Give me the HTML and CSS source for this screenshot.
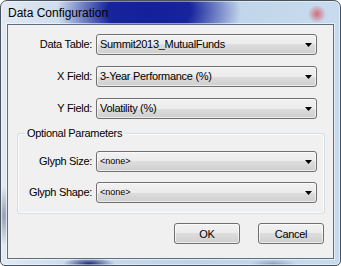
FILE: index.html
```html
<!DOCTYPE html>
<html>
<head>
<meta charset="utf-8">
<title>Data Configuration</title>
<link rel="stylesheet" href="styles.css">
</head>
<body>
<div class="window">
  <div class="titlebar"><span class="title">Data Configuration</span></div>
  <div class="client">
    <div class="form">
      <span class="lbl">Data Table:</span>
      <div class="combo"><span class="val">Summit2013_MutualFunds</span><svg class="arrow" width="7" height="4" viewBox="0 0 7 4"><polygon points="0,0 7,0 3.5,4" fill="#000"/></svg></div>
      <span class="lbl">X Field:</span>
      <div class="combo"><span class="val">3-Year Performance (%)</span><svg class="arrow" width="7" height="4" viewBox="0 0 7 4"><polygon points="0,0 7,0 3.5,4" fill="#000"/></svg></div>
      <span class="lbl">Y Field:</span>
      <div class="combo"><span class="val">Volatility (%)</span><svg class="arrow" width="7" height="4" viewBox="0 0 7 4"><polygon points="0,0 7,0 3.5,4" fill="#000"/></svg></div>
    </div>
    <fieldset class="group">
      <legend class="legend">Optional Parameters</legend>
      <div class="form inner">
        <span class="lbl">Glyph Size:</span>
        <div class="combo"><span class="val small">&lt;none&gt;</span><svg class="arrow" width="7" height="4" viewBox="0 0 7 4"><polygon points="0,0 7,0 3.5,4" fill="#000"/></svg></div>
        <span class="lbl">Glyph Shape:</span>
        <div class="combo"><span class="val small">&lt;none&gt;</span><svg class="arrow" width="7" height="4" viewBox="0 0 7 4"><polygon points="0,0 7,0 3.5,4" fill="#000"/></svg></div>
      </div>
    </fieldset>
    <div class="buttons">
      <button class="btn">OK</button>
      <button class="btn">Cancel</button>
    </div>
  </div>
</div>
</body>
</html>
```
FILE: styles.css
```css
html, body {
  margin: 0;
  padding: 0;
  background: #ffffff;
}
body {
  width: 341px;
  height: 266px;
  overflow: hidden;
  font-family: "Liberation Sans", Arial, sans-serif;
}
.window {
  box-sizing: border-box;
  width: 341px;
  height: 266px;
  border: 1px solid #48535f;
  border-radius: 7px 7px 5px 5px;
  padding: 0 6px 6px 6px;
  display: flex;
  flex-direction: column;
  box-shadow: inset 0 0 0 1px rgba(255,255,255,0.45);
  background:
    radial-gradient(circle 9px at 316px 13px, rgba(214,80,92,0.8), rgba(214,80,92,0)),
    radial-gradient(ellipse 92px 55px at 148px 10px, #14209a 0%, #17249c 45%, rgba(60,90,180,0) 100%),
    radial-gradient(ellipse 26px 7px at 88px 263px, #1a2878 0%, rgba(26,40,120,0) 100%),
    radial-gradient(ellipse 24px 5px at 272px 263px, rgba(120,140,175,0.7), rgba(120,140,175,0)),
    radial-gradient(ellipse 6px 30px at 3px 215px, rgba(110,125,150,0.7), rgba(110,125,150,0)),
    linear-gradient(90deg, #e2eaf3 0%, #cddcec 18%, #bed3e9 55%, #c8dbee 100%);
}
.titlebar {
  height: 23px;
  display: flex;
  align-items: center;
  padding-left: 1px;
}
.title {
  font-size: 12px;
  color: #000;
}
.client {
  flex: 1;
  background: #f0f0f0;
  border: 1px solid #5d6d82;
  box-shadow: 0 0 0 1px rgba(255,255,255,0.55);
  padding: 9px 8px 0 9px;
  font-size: 11px;
  letter-spacing: -0.3px;
  color: #000;
}
.form {
  display: grid;
  grid-template-columns: 75px 221px;
  column-gap: 4px;
  row-gap: 11px;
  align-items: center;
}
.form.inner {
  grid-template-columns: 74px 221px;
  row-gap: 10px;
}
.lbl {
  text-align: right;
  white-space: nowrap;
  line-height: 13px;
}
.combo {
  box-sizing: border-box;
  height: 21px;
  border: 1px solid #707070;
  border-radius: 3px;
  display: flex;
  align-items: center;
  padding: 0 4px 0 3px;
  background: linear-gradient(to bottom, #f2f2f2 0%, #ebebeb 50%, #dddddd 50%, #cfcfcf 100%);
  box-shadow: inset 0 0 0 1px rgba(255,255,255,0.6);
}
.val {
  flex: 1;
  white-space: nowrap;
  line-height: 13px;
}
.val.small {
  font-size: 9px;
  letter-spacing: 0;
}
.arrow {
  display: block;
  flex: none;
}
.group {
  margin: 8px 0 0 0;
  padding: 11px 7px 10px 0;
  border: 1px solid #d5dfe5;
  border-radius: 3px;
  min-width: 0;
  box-shadow: inset 0 0 0 1px rgba(255,255,255,0.7);
}
.legend {
  margin-left: 7px;
  padding: 0 2px;
  line-height: 13px;
}
.buttons {
  display: flex;
  justify-content: flex-end;
  gap: 18px;
  margin-top: 9px;
  padding-right: 1px;
}
.btn {
  box-sizing: border-box;
  width: 66px;
  height: 21px;
  margin: 0;
  padding: 0;
  border: 1px solid #707070;
  border-radius: 3px;
  font-family: "Liberation Sans", Arial, sans-serif;
  font-size: 11px;
  letter-spacing: -0.3px;
  color: #000;
  background: linear-gradient(to bottom, #f2f2f2 0%, #ebebeb 50%, #dddddd 50%, #cfcfcf 100%);
  box-shadow: inset 0 0 0 1px rgba(255,255,255,0.6);
}
```
